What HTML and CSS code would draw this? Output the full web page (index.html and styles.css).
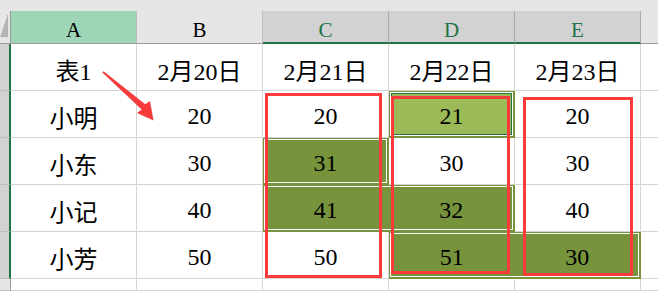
FILE: index.html
```html
<!DOCTYPE html>
<html lang="zh-CN">
<head>
<meta charset="utf-8">
<link rel="stylesheet" href="styles.css">
</head>
<body>
<div class="sheet">
  <div class="topbar"></div>
  <div class="grid">
    <div class="corner"><span class="tri"></span></div>
    <div class="ch ch-a">A</div>
    <div class="ch">B</div>
    <div class="ch sel">C</div>
    <div class="ch sel">D</div>
    <div class="ch sel">E</div>
    <div class="ch rest"></div>

    <div class="rh"></div>
    <div class="c">表1</div>
    <div class="c">2月20日</div>
    <div class="c">2月21日</div>
    <div class="c">2月22日</div>
    <div class="c">2月23日</div>
    <div class="c rest"></div>

    <div class="rh"></div>
    <div class="c">小明</div>
    <div class="c">20</div>
    <div class="c">20</div>
    <div class="c lite">21</div>
    <div class="c">20</div>
    <div class="c rest"></div>

    <div class="rh"></div>
    <div class="c">小东</div>
    <div class="c">30</div>
    <div class="c dark">31</div>
    <div class="c">30</div>
    <div class="c">30</div>
    <div class="c rest"></div>

    <div class="rh"></div>
    <div class="c">小记</div>
    <div class="c">40</div>
    <div class="c dark span2"><span class="half">41</span><span class="half">32</span></div>
    <div class="c">40</div>
    <div class="c rest"></div>

    <div class="rh"></div>
    <div class="c">小芳</div>
    <div class="c">50</div>
    <div class="c">50</div>
    <div class="c dark span2"><span class="half">51</span><span class="half">30</span></div>
    <div class="c rest"></div>

    <div class="rh last"></div>
    <div class="c"></div>
    <div class="c"></div>
    <div class="c"></div>
    <div class="c"></div>
    <div class="c"></div>
    <div class="c rest"></div>
  </div>

  <div class="mark mark-c"></div>
  <div class="mark mark-d"></div>
  <div class="mark mark-e"></div>

  <svg class="arrow" width="658" height="291" viewBox="0 0 658 291">
    <polygon points="102.3,72.6 103.6,71.3 145.2,104.2 150,101 153.5,120.5 137,113 141.6,109.6" fill="#f63c3c"/>
  </svg>
</div>
</body>
</html>
```

FILE: styles.css
```css
html, body {
  margin: 0;
  padding: 0;
  background: #ffffff;
}

.sheet {
  position: relative;
  width: 658px;
  height: 291px;
  overflow: hidden;
  font-family: "Liberation Serif", "Noto Sans CJK SC", serif;
  color: #000;
}

.topbar {
  height: 11px;
  background: #e6e6e6;
}

.grid {
  display: grid;
  grid-template-columns: 11px repeat(5, 126px) 1fr;
  grid-template-rows: 33px repeat(5, 47px) 1fr;
  height: 280px;
}

.grid > div {
  box-sizing: border-box;
}

.corner {
  background: #e6e6e6;
  border-right: 1px solid #9b9b9b;
  border-bottom: 1px solid #9b9b9b;
  display: flex;
  align-items: flex-end;
  padding-bottom: 6px;
}

.tri {
  display: block;
  width: 8px;
  height: 23px;
  background: linear-gradient(to bottom right, transparent 50%, #b4b4b4 50%);
}

.ch {
  background: #e6e6e6;
  border-right: 1px solid #bdbdbd;
  border-bottom: 1px solid #9b9b9b;
  display: flex;
  align-items: center;
  justify-content: center;
  font-size: 21px;
  padding-top: 7px;
}

.ch-a {
  background: #9fd5b7;
}

.ch.sel {
  background: #d2d2d2;
  color: #217346;
  border-right-color: #ababab;
  border-bottom: 2px solid #217346;
}

.ch.rest {
  border-right: none;
}

.rh {
  background: #d2d2d2;
  border-right: 2px solid #217346;
  border-bottom: 1px solid #bfbfbf;
}

.rh.last {
  background: #e6e6e6;
  border-right: 1px solid #9b9b9b;
}

.c {
  border-right: 1px solid #d4d4d4;
  border-bottom: 1px solid #d4d4d4;
  display: flex;
  align-items: center;
  justify-content: center;
  font-size: 24px;
  padding-top: 5px;
}

.c.rest {
  border-right: none;
}

.dark {
  background: #77933c;
  border-right-color: #77933c;
  border-bottom-color: #77933c;
  box-shadow: inset 0 0 0 1px #77933c, inset 0 0 0 2px #ffffff;
}

.lite {
  background: #9bbb59;
  border-right-color: #77933c;
  border-bottom-color: #77933c;
  box-shadow: inset 0 0 0 1px #77933c, inset 0 0 0 2px #ffffff, inset 0 0 0 3px #217346;
}

.span2 {
  grid-column: span 2;
  justify-content: stretch;
}

.half {
  flex: 1;
  text-align: center;
}

.mark {
  position: absolute;
  box-sizing: border-box;
  border: 3px solid #fb3b3b;
}

.mark-c {
  left: 265px;
  top: 93px;
  width: 117px;
  height: 185px;
}

.mark-d {
  left: 391px;
  top: 96px;
  width: 119px;
  height: 178px;
}

.mark-e {
  left: 523px;
  top: 97px;
  width: 110px;
  height: 179px;
}

.arrow {
  position: absolute;
  left: 0;
  top: 0;
  pointer-events: none;
}
```
